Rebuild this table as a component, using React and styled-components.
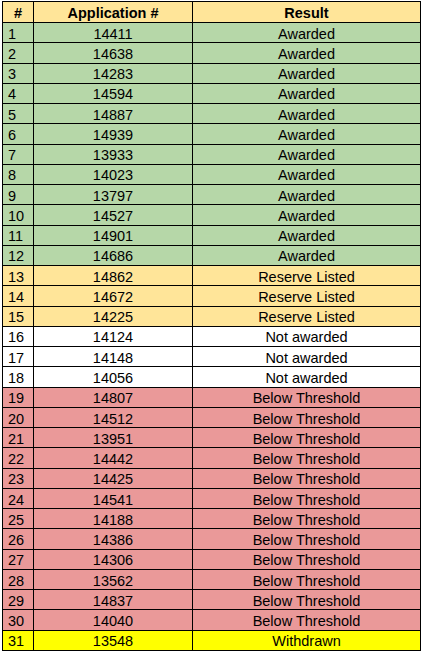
import React from "react";
import styled, { createGlobalStyle } from "styled-components";

const GlobalStyle = createGlobalStyle`
  html, body { margin: 0; padding: 0; background: #ffffff; }
  body { font-family: "Liberation Sans", Arial, sans-serif; }
`;

const Page = styled.div`
  padding: 1px 0 0 2px;
`;

const Sheet = styled.div`
  display: grid;
  grid-template-columns: 31px 159px 228px;
  grid-template-rows: 21px repeat(31, 1fr);
  width: 419px;
  height: 650px;
  box-sizing: border-box;
  border-top: 1px solid #000;
  border-left: 1px solid #000;
`;

const COLORS = {
  header: "#ffe599",
  awarded: "#b6d7a8",
  reserve: "#ffe599",
  none: "#ffffff",
  below: "#ea9999",
  withdrawn: "#ffff00",
};

const Cell = styled.div`
  box-sizing: border-box;
  border-right: 1px solid #000;
  border-bottom: 1px solid #000;
  background: ${(p) => COLORS[p.$tone]};
  display: flex;
  align-items: center;
  justify-content: ${(p) => (p.$left ? "flex-start" : "center")};
  padding: 2px 0 0 ${(p) => (p.$left ? "5px" : "0")};
  font-size: 14.5px;
  line-height: 16px;
  color: #000;
  font-weight: ${(p) => (p.$bold ? 700 : 400)};
  white-space: nowrap;
  overflow: hidden;
`;

const data = [
  ["14411", "Awarded"], ["14638", "Awarded"], ["14283", "Awarded"],
  ["14594", "Awarded"], ["14887", "Awarded"], ["14939", "Awarded"],
  ["13933", "Awarded"], ["14023", "Awarded"], ["13797", "Awarded"],
  ["14527", "Awarded"], ["14901", "Awarded"], ["14686", "Awarded"],
  ["14862", "Reserve Listed"], ["14672", "Reserve Listed"], ["14225", "Reserve Listed"],
  ["14124", "Not awarded"], ["14148", "Not awarded"], ["14056", "Not awarded"],
  ["14807", "Below Threshold"], ["14512", "Below Threshold"], ["13951", "Below Threshold"],
  ["14442", "Below Threshold"], ["14425", "Below Threshold"], ["14541", "Below Threshold"],
  ["14188", "Below Threshold"], ["14386", "Below Threshold"], ["14306", "Below Threshold"],
  ["13562", "Below Threshold"], ["14837", "Below Threshold"], ["14040", "Below Threshold"],
  ["13548", "Withdrawn"],
];

const toneOf = (r) =>
  r === "Awarded" ? "awarded"
  : r === "Reserve Listed" ? "reserve"
  : r === "Not awarded" ? "none"
  : r === "Below Threshold" ? "below"
  : "withdrawn";

export default function App() {
  return (
    <>
      <GlobalStyle />
      <Page>
        <Sheet>
          <Cell $tone="header" $bold>#</Cell>
          <Cell $tone="header" $bold>Application #</Cell>
          <Cell $tone="header" $bold>Result</Cell>
          {data.map(([app, res], i) => {
            const tone = toneOf(res);
            return (
              <React.Fragment key={i}>
                <Cell $tone={tone} $left>{i + 1}</Cell>
                <Cell $tone={tone}>{app}</Cell>
                <Cell $tone={tone}>{res}</Cell>
              </React.Fragment>
            );
          })}
        </Sheet>
      </Page>
    </>
  );
}
